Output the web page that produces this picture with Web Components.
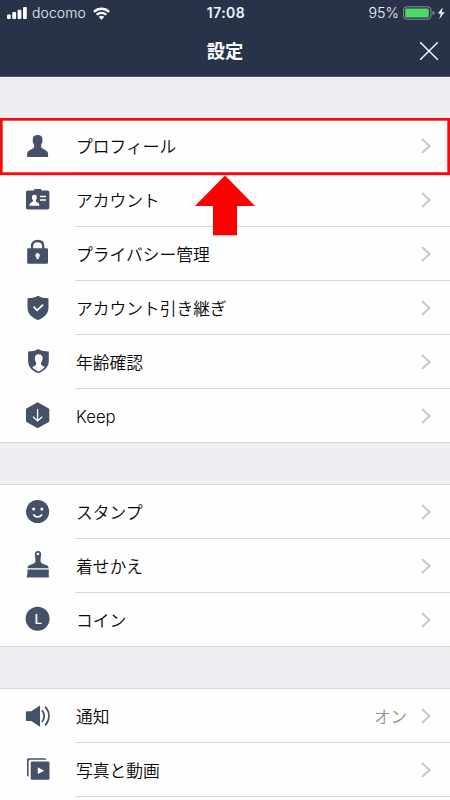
<!DOCTYPE html>
<html lang="ja">
<head>
<meta charset="utf-8">
<title>設定</title>
<style>
html,body{margin:0;height:100%;overflow:hidden;background:#efeef3}
body{font-family:Inter,"Noto Sans CJK JP",sans-serif}
</style>
</head>
<body>
<settings-screen></settings-screen>
<script>
const define = (name, html, setup) => {
  const t = document.createElement('template');
  t.innerHTML = html;
  customElements.define(name, class extends HTMLElement {
    constructor() {
      super();
      this.attachShadow({mode: 'open'}).append(t.content.cloneNode(true));
    }
    connectedCallback() { if (setup) setup(this, this.shadowRoot); }
  });
};

/* Each icon is drawn in a 32x54 cell whose x origin is 22. */
const ICONS = {
  person: '<path d="M37.600 16c3.400 0 5 2 4.900 4.800 0 2.400-.6 4-1.500 5.500-.3 1.500.4 2.700 1.900 3.500 3.300 1.700 5.200 2.500 5.200 5.200V38H27.100v-3c0-2.700 2-3.500 5.300-5.200 1.500-.8 2.100-2 1.800-3.500-.9-1.500-1.500-3.100-1.500-5.500 0-2.800 1.500-4.800 4.900-4.800z"/>',
  badge: '<path d="M27.600 17.500H34v-.8q0-.7.700-.7h6q.7 0 .7.700v.8h6.200q1.800 0 1.800 1.700v15.500q0 1.800-1.800 1.800h-20q-1.600 0-1.600-1.800V19.200q0-1.700 1.600-1.700z"/><path fill="#fff" d="M34.300 21.700c1.900 0 2.700 1.200 2.500 2.900-.1 1.200-.5 1.900-.9 2.600-.2 1 .3 1.600 1 2 1.800.8 2.500 1.300 2.500 3.500h-10c0-2.200.7-2.700 2.500-3.500.8-.4 1.200-1 1-2-.5-.7-.9-1.400-1-2.600-.1-1.700.5-2.900 2.400-2.900zM40 22.800h6v1.500h-6zM40 26.300h6v1.500h-6z"/>',
  lock: '<path fill="none" stroke="#455169" stroke-width="2.300" d="M32 22.500v-3.200c0-3.500 2.200-5.300 5.600-5.300s5.600 1.800 5.600 5.300v3.200"/><rect x="27.200" y="21.200" width="20.800" height="15.600" rx="1.200"/><path fill="#fff" d="M37.600 26a2.300 2.300 0 0 1 1.200 4.200V32h-2.400v-1.800a2.300 2.300 0 0 1 1.200-4.200z"/>',
  shield: '<path d="M38 14.800c3.400 2 6.500 2.400 10.500 2.400v9.500c0 6-4.800 10.300-10.500 12.200-5.700-1.900-10.500-6.200-10.500-12.200v-9.500c4 0 7.100-.4 10.500-2.400z"/><path fill="none" stroke="#fff" stroke-width="1.700" d="M33.600 25.700l3.500 3.700 6-5.800"/>',
  shieldPerson: '<path d="M38.200 14c3.400 2 6.600 2.400 10.600 2.400v9.500c0 6-4.900 10.300-10.600 12.200-5.700-1.900-10.100-6.200-10.100-12.200v-9.500c4 0 6.700-.4 10.100-2.400z"/><path fill="#fff" d="M38.700 19.300c2.700 0 4 1.700 3.900 4.200-.1 1.800-.6 3.100-1.500 4.300-.4 1.700.1 2.700 2.200 3.500l1.300.6c-1.600 2.100-3.900 3.600-6.300 4.500-2.500-.9-4.500-2.300-6-4.300l1.700-.8c2-.9 2.500-1.800 2.100-3.500-.8-1.200-1.200-2.500-1.300-4.300-.1-2.500 1.200-4.200 3.900-4.200z"/>',
  keep: '<path stroke="#455169" stroke-width="2" stroke-linejoin="round" d="M37.600 14.300l10.700 6.100v11.800l-10.700 5.900L27 32.200V20.400z"/><path fill="none" stroke="#fff" stroke-width="1.300" d="M37.600 20v11.800M33 27.800l4.600 4.100 4.600-4.100"/>',
  smile: '<circle cx="37.600" cy="26.500" r="11.600"/><g fill="#fff"><circle cx="33.700" cy="24" r="1.500"/><circle cx="41.900" cy="24" r="1.500"/></g><path fill="none" stroke="#fff" stroke-width="1.600" d="M33.400 29.400c1.700 3.400 6.800 3.400 8.600 0"/>',
  brush: '<path fill-rule="evenodd" d="M38 12c2.200 0 3.200 1.400 3.100 3.300l-.6 6c0 2.200.9 3.200 3.600 4 3.200 1 4.500 2 4.500 3.900H27.400c0-1.900 1.300-2.900 4.500-3.900 2.700-.8 3.600-1.800 3.600-4l-.6-6C34.800 13.400 35.800 12 38 12zm0 1.700a1.300 1.300 0 1 0 0 2.600 1.300 1.300 0 0 0 0-2.600zM27.600 30.500h21.200v8.100H26.600q1-3.500 1-8.100z"/>',
  coin: '<circle cx="37.600" cy="25.800" r="12"/><text x="38.200" y="30.700" text-anchor="middle" fill="#fff" font-family="Inter,sans-serif" font-size="13.500" font-weight="500">L</text>',
  sound: '<path d="M26.900 22.200h4.400L40 16.500v21.200l-8.700-5.700h-4.400q-1 0-1-1v-7.800q0-1 1-1z"/><path fill="none" stroke="#455169" stroke-width="1.800" d="M42 21.300c2.700 3.500 2.700 8.100 0 11.600M45.200 17.700c4.900 5.800 4.900 12.900 0 18.800"/>',
  media: '<path d="M28.500 15.200H45q1.300 0 1.300 1.600H30q-1.400 0-1.400 1.400v15.300q-1.600 0-1.600-1.300V16.700q0-1.500 1.500-1.500z"/><rect x="30.700" y="18.500" width="18.800" height="18.300" rx="1.300"/><path fill="#fff" d="M37.800 24.300v6.800l6.400-3.400z"/>'
};

define('status-bar', `<style>
:host{display:grid;grid-template-columns:1fr auto 1fr;align-items:center;height:26px;padding:0 5px 0 7px;color:#f1f4fa;font-size:14px;line-height:18px}
.side{display:flex;align-items:center}
.right{justify-content:flex-end}
b{font-weight:600;font-size:14px;letter-spacing:.45px}
svg{display:block}
.carrier{margin:0 7px 0 5px;font-size:14px;font-weight:300;letter-spacing:.1px}
.pct{margin-right:4px;font-size:14.300px;font-weight:300}
</style>
<div class="side"><svg width="20" height="12" viewBox="0 0 20 12" fill="#fff"><rect y="7.500" width="3.800" height="4.500" rx="1"/><rect x="5.300" y="5" width="3.800" height="7" rx="1"/><rect x="10.600" y="2.700" width="3.800" height="9.300" rx="1"/><rect x="16" width="3.800" height="12" rx="1"/></svg>
<span class="carrier">docomo</span>
<svg width="17" height="13" viewBox="0 0 17 13"><g fill="none" stroke="#fff" stroke-width="2.300"><path d="M.9 4.900c4.300-4.200 10.900-4.200 15.200 0M3.700 7.800c2.700-2.700 6.900-2.700 9.600 0"/></g><path fill="#fff" d="M5.800 9.900c1.600-1.500 3.800-1.500 5.400 0L8.500 12.700z"/></svg></div>
<b>17:08</b>
<div class="side right"><span class="pct">95%</span><svg width="42" height="14" viewBox="0 0 42 14"><rect x=".6" y=".8" width="27.300" height="12.400" rx="3" fill="none" stroke="#8993a5" stroke-width="1"/><rect x="2.200" y="2.400" width="23.600" height="9.200" rx="1.300" fill="#4cd964"/><path d="M29.500 5q2 .4 2 2t-2 2z" fill="#8993a5"/><path fill="#fff" d="M39.700 1.300l-4.700 6.300h2.900l-1.600 5.300 5.400-6.700h-3z"/></svg></div>`);

define('title-bar', `<style>
:host{display:grid;grid-template-columns:40px 1fr 40px;align-items:center;height:50px;color:#fff}
h1{grid-column:2;margin:0;padding-bottom:2px;text-align:center;font:700 18.3px/26px "Noto Sans CJK JP",sans-serif}
svg{display:block;justify-self:start;margin-left:9px}
</style><h1><slot></slot></h1><svg width="20" height="20" viewBox="0 0 20 20"><path d="M1.200 1.200l17.600 17.600M18.800 1.200L1.200 18.800" stroke="#fff" stroke-width="1.400"/></svg>`);

define('settings-group', `<style>
:host{display:flex;flex-direction:column;background:#fefefe;border-top:1px solid #d6d5da;margin-bottom:41px}
:host(:not([continued])) ::slotted(:last-child){--line-start:0px}
</style><slot></slot>`);

define('settings-row', `<style>
:host{display:flex;align-items:center;height:54px;padding:0 18px 0 22px;box-sizing:border-box;color:#080808;
background:linear-gradient(#d6d6d9,#d6d6d9) var(--line-start,75px) 100%/100% 1px no-repeat}
.icon{flex:none;width:32px;height:54px;fill:#455169}
.label{flex:1;padding:2px 0 0 22px;font-size:16.750px;font-weight:350;line-height:24px;white-space:nowrap}
.value{padding-top:2px;font-size:16.500px;font-weight:350;line-height:24px;color:#929296;margin-right:13px}
.chev{flex:none}
</style><svg class="icon" viewBox="22 0 32 54"></svg><span class="label"><slot></slot></span><span class="value"></span>
<svg class="chev" width="12" height="18" viewBox="0 0 12 18"><path d="M2 2l7.500 7L2 16" fill="none" stroke="#c6c6ca" stroke-width="1.900"/></svg>`,
(host, root) => {
  root.querySelector('.icon').innerHTML = ICONS[host.getAttribute('icon')];
  root.querySelector('.value').textContent = host.getAttribute('value') || '';
});

define('callout-mark', `<style>
:host{display:block;position:absolute;left:0;top:118px;width:450px;height:118px;pointer-events:none}
svg{display:block}
</style><svg width="450" height="118" viewBox="0 0 450 118"><rect x="1.250" y="1.250" width="447.500" height="54.500" fill="none" stroke="#f40b0f" stroke-width="2.900"/><path fill="#fe0000" d="M225 57.500l30 30.500h-18v29.300h-24V88h-18z"/></svg>`);

define('settings-screen', `<style>
:host{display:flex;flex-direction:column;position:relative;width:450px;height:800px;overflow:hidden;background:#efeef3}
header{flex:none;height:77px;box-sizing:border-box;background:#283349;border-bottom:1px solid #50586b}
main{flex:1;display:flex;flex-direction:column;padding-top:41px}
settings-group{flex:none}
settings-group[continued]{flex:1;margin-bottom:0}
</style>
<header><status-bar></status-bar><title-bar>設定</title-bar></header>
<main>
<settings-group>
<settings-row icon="person">プロフィール</settings-row>
<settings-row icon="badge">アカウント</settings-row>
<settings-row icon="lock">プライバシー管理</settings-row>
<settings-row icon="shield">アカウント引き継ぎ</settings-row>
<settings-row icon="shieldPerson">年齢確認</settings-row>
<settings-row icon="keep">Keep</settings-row>
</settings-group>
<settings-group>
<settings-row icon="smile">スタンプ</settings-row>
<settings-row icon="brush">着せかえ</settings-row>
<settings-row icon="coin">コイン</settings-row>
</settings-group>
<settings-group continued>
<settings-row icon="sound" value="オン">通知</settings-row>
<settings-row icon="media">写真と動画</settings-row>
</settings-group>
</main>
<callout-mark></callout-mark>`);
</script>
</body>
</html>
